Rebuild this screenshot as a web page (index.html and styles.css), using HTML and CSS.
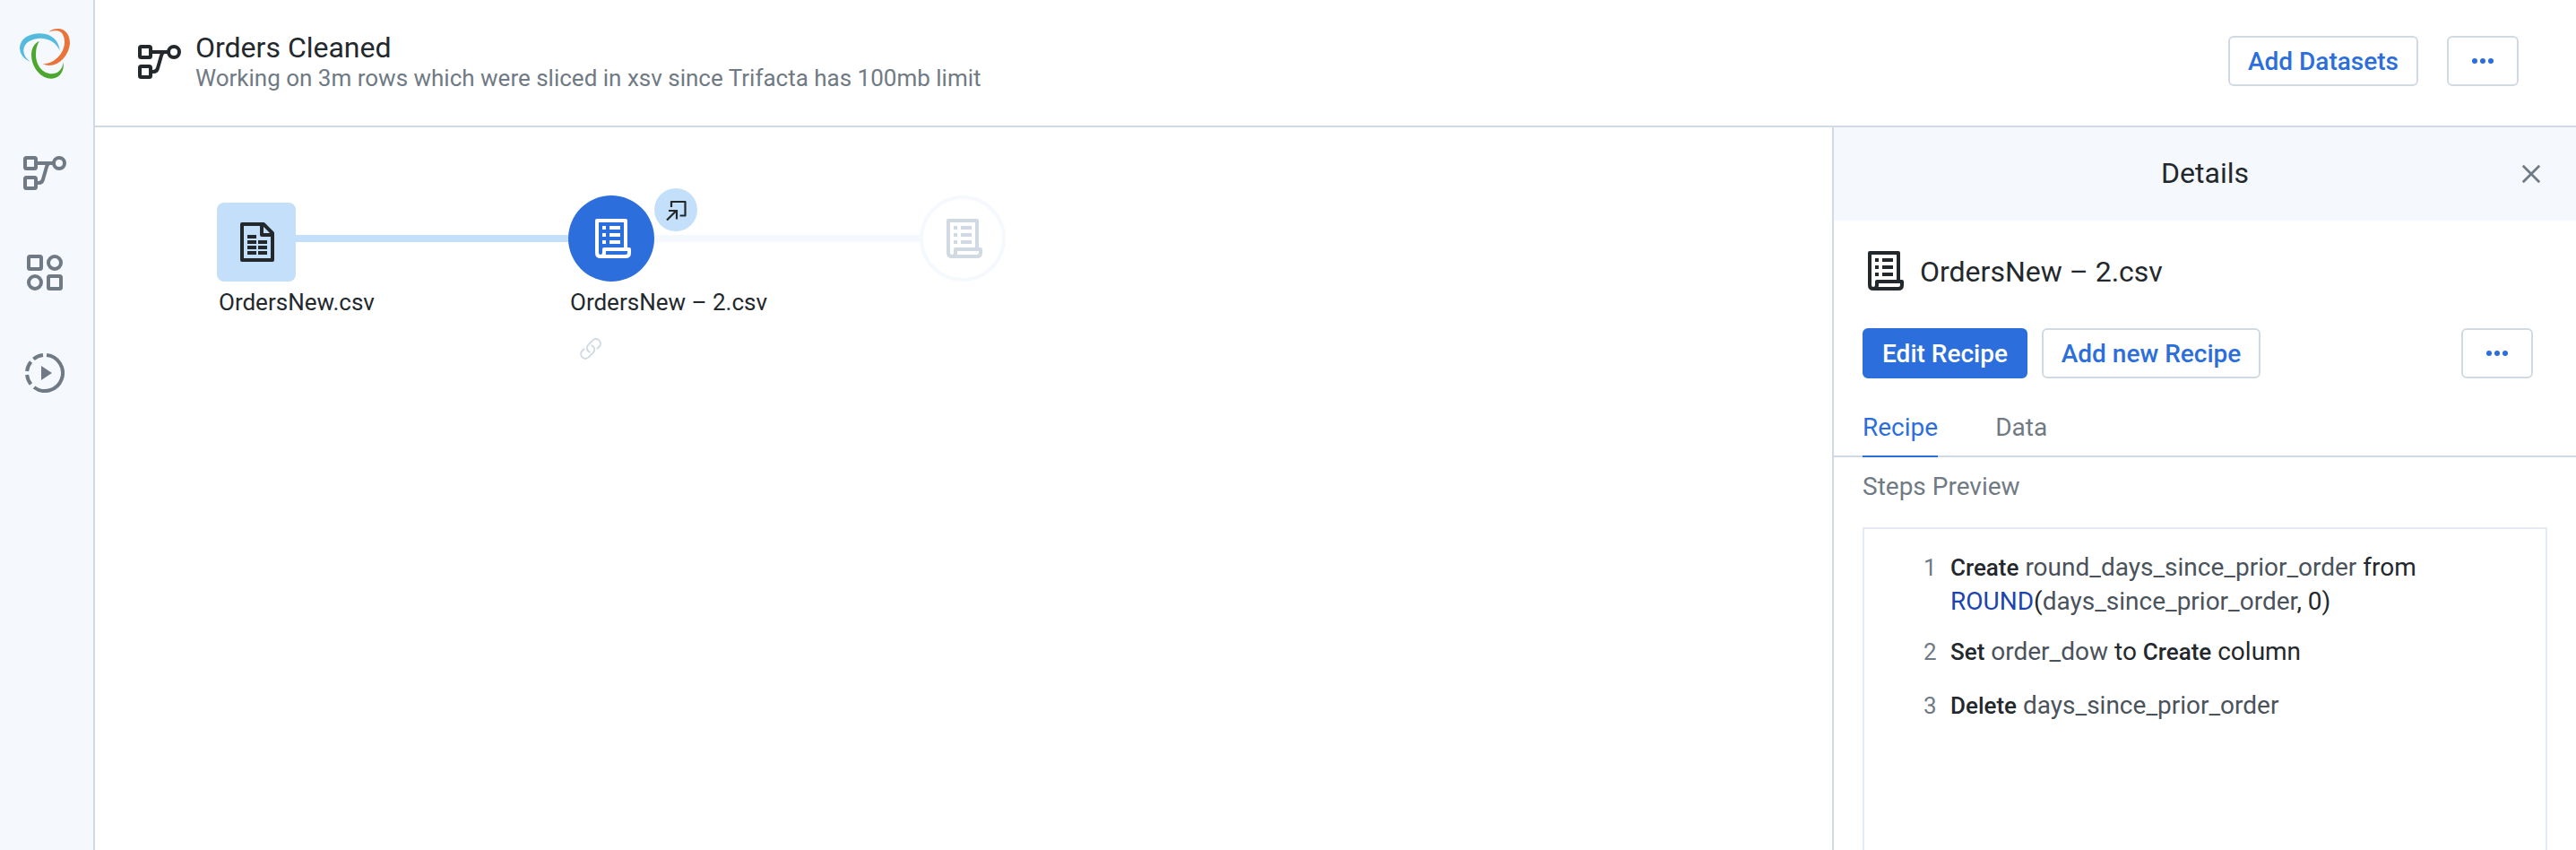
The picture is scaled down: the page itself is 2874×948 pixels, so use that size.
FILE: index.html
```html
<!DOCTYPE html>
<html lang="en">
<head>
<meta charset="utf-8">
<title>Orders Cleaned</title>
<link rel="stylesheet" href="styles.css">
</head>
<body>
<svg class="defs" width="0" height="0" aria-hidden="true">
  <symbol id="flow" viewBox="0 0 48 38">
    <g fill="none" stroke="currentColor" stroke-width="4">
      <rect x="2" y="2" width="12" height="12" rx="1.5"/>
      <rect x="2" y="24" width="12" height="12" rx="1.5"/>
      <circle cx="40" cy="8" r="6"/>
      <path d="M14 8H34M14 30h3q4 0 5-4l4-14q1-4 4-4"/>
    </g>
  </symbol>
  <symbol id="recipe" viewBox="0 0 40 44">
    <path fill="none" stroke="currentColor" stroke-width="4" stroke-linejoin="round" d="M34 34V2H2V38q0 4 4 4H34q4 0 4-4V34H10V38q0 4-4 4"/>
    <path fill="currentColor" d="M8 8h4v4H8zM16 8h12v4H16zM8 16h4v4H8zM16 16h12v4H16zM8 24h4v4H8zM16 24h12v4H16z"/>
  </symbol>
  <symbol id="dots" viewBox="0 0 24 6">
    <g fill="currentColor"><circle cx="3" cy="3" r="3"/><circle cx="12" cy="3" r="3"/><circle cx="21" cy="3" r="3"/></g>
  </symbol>
</svg>
<div class="app">
  <nav class="sidebar">
    <svg class="logo" width="56" height="56" viewBox="0 0 56 56">
      <path fill="#54bbde" d="M12.500 37C4 34 0 28 0 21C1 10 11 5.500 23 5.300C36 5.500 44 14 44.700 24.700C41 15.500 32 10.500 22 10.800C11 11.500 4.300 17 4.300 24.500C4.300 29.500 8 34.500 12.500 37Z"/>
      <path fill="#e8743b" d="M32.300 3.700C35 1 39 0 43 0C51 0 56 7 56 16.300C55 29 45 41 33 41C30 41 28 40.300 25.700 39.300C37 39.500 50 29 50 14.500C50 7 46 2 41 2.300C37 2.300 35 2.700 32.300 3.700Z"/>
      <path fill="#4ca72e" d="M21.700 14C16 16.500 13 22 13 29.700C13.500 44 24 55.700 35.300 55.700C44 55.700 50 48 48.700 37.300C47.500 46 42.500 50.300 35.500 50.300C26 50.300 18 41 18 29C18 23 19 18.500 21.700 14Z"/>
    </svg>
    <svg class="nav-flow" width="48" height="38"><use href="#flow"/></svg>
    <svg class="nav-library" width="40" height="40" viewBox="0 0 40 40" fill="none" stroke="currentColor" stroke-width="4">
      <rect x="2" y="2" width="14" height="14" rx="1.500"/><circle cx="31" cy="9" r="7"/>
      <circle cx="9" cy="31" r="7"/><rect x="24" y="24" width="14" height="14" rx="1.500"/>
    </svg>
    <svg class="nav-jobs" width="44" height="44" viewBox="0 0 44 44" fill="none" stroke="currentColor" stroke-width="4">
      <path d="M24 2.100A20 20 0 1 1 10 38M6.500 34.600A20 20 0 0 1 2.100 24M2.100 20A20 20 0 0 1 6.500 9.400M9.400 6.500A20 20 0 0 1 20 2.100"/>
      <path fill="currentColor" stroke="none" d="M18 14l12 8-12 8z"/>
    </svg>
  </nav>
  <div class="page">
    <header class="topbar">
      <svg class="topbar-icon" width="48" height="38"><use href="#flow"/></svg>
      <div class="heading">
        <h1 class="title">Orders Cleaned</h1>
        <p class="subtitle">Working on 3m rows which were sliced in xsv since Trifacta has 100mb limit</p>
      </div>
      <button class="btn add-datasets">Add Datasets</button>
      <button class="btn more"><svg width="24" height="6"><use href="#dots"/></svg></button>
    </header>
    <div class="body">
      <main class="canvas">
        <div class="edge edge-main"></div>
        <div class="edge edge-faint"></div>
        <div class="node source">
          <svg width="38" height="44" viewBox="0 0 38 44">
            <path fill="none" stroke="currentColor" stroke-width="4" stroke-linejoin="round" d="M2 2H26L36 12V42H2ZM24 2V14H36"/>
            <path fill="currentColor" d="M8 14h10v4H8zM8 20h10v4H8zM20 20h10v4H20zM8 26h10v4H8zM20 26h10v4H20zM8 32h10v4H8zM20 32h10v4H20z"/>
          </svg>
        </div>
        <div class="label label-source">OrdersNew.csv</div>
        <div class="node recipe"><svg width="40" height="44"><use href="#recipe"/></svg></div>
        <div class="label label-recipe">OrdersNew – 2.csv</div>
        <div class="node badge">
          <svg width="24" height="24" viewBox="0 0 24 24" fill="none" stroke="currentColor" stroke-width="2.200">
            <path stroke-linejoin="round" d="M7 9V3H22.500V18.500H16.500"/><path d="M2 23.500L12.500 13M4 13H13V22.500"/>
          </svg>
        </div>
        <svg class="link" width="24" height="24" viewBox="1.250 1.250 21.500 21.500" fill="none" stroke="currentColor" stroke-width="1.800" stroke-linecap="round" stroke-linejoin="round">
          <path d="M13.190 8.688a4.500 4.500 0 0 1 1.242 7.244l-4.500 4.500a4.500 4.500 0 0 1-6.364-6.364l1.757-1.757m13.350-.622 1.757-1.757a4.500 4.500 0 0 0-6.364-6.364l-4.500 4.500a4.500 4.500 0 0 0 1.242 7.244"/>
        </svg>
        <div class="node ghost"><svg width="40" height="44"><use href="#recipe"/></svg></div>
      </main>
      <aside class="panel">
        <div class="panel-head">
          <span class="panel-title">Details</span>
          <svg class="close" width="20" height="20" viewBox="0 0 20 20" stroke="currentColor" stroke-width="2.800"><path d="M.8.800L19.200 19.200M19.200.800L.8 19.200"/></svg>
        </div>
        <div class="recipe-name"><svg width="40" height="44"><use href="#recipe"/></svg><span>OrdersNew – 2.csv</span></div>
        <div class="actions">
          <button class="btn primary">Edit Recipe</button>
          <button class="btn add-recipe">Add new Recipe</button>
          <button class="btn more push"><svg width="24" height="6"><use href="#dots"/></svg></button>
        </div>
        <div class="tabs"><span class="tab active">Recipe</span><span class="tab">Data</span></div>
        <div class="steps-title">Steps Preview</div>
        <ol class="steps">
          <li class="step wrapped"><span class="num">1</span><span><b>Create</b> <i>round_days_since_prior_order</i> from<br><em>ROUND</em>(<i>days_since_prior_order</i>, 0)</span></li>
          <li class="step"><span class="num">2</span><span><b>Set</b> <i>order_dow</i> to <b>Create</b> column</span></li>
          <li class="step"><span class="num">3</span><span><b>Delete</b> <i>days_since_prior_order</i></span></li>
        </ol>
      </aside>
    </div>
  </div>
</div>
</body>
</html>
```
FILE: styles.css
```css
* { box-sizing: border-box; }
body { margin: 0; font-family: Roboto, sans-serif; color: #23282d; background: #fff; }
svg { display: block; flex: none; }
.defs { position: absolute; }
.app { display: flex; width: 2874px; height: 948px; overflow: hidden; }

.sidebar { width: 106px; flex: none; display: flex; flex-direction: column; align-items: center; padding: 32px 4px 0 0; background: #f5f9fe; border-right: 2px solid #d1dae3; color: #707a84; }
.nav-flow { margin-top: 86px; }
.nav-library { margin-top: 72px; }
.nav-jobs { margin-top: 70px; }

.page { flex: 1; display: flex; flex-direction: column; min-width: 0; }
.topbar { height: 142px; flex: none; display: flex; align-items: flex-start; padding: 0 64px 0 48px; border-bottom: 2px solid #d1dae3; }
.topbar-icon { margin-top: 50px; }
.heading { flex: 1; margin-left: 16px; padding-top: 34px; }
.title { margin: 0; font-size: 32px; line-height: 38px; font-weight: 400; }
.subtitle { margin: 0; font-size: 26px; line-height: 30px; color: #707a84; }
.btn { height: 56px; display: flex; align-items: center; justify-content: center; padding: 0; border: 2px solid #d1dae3; border-radius: 6px; background: #fff; color: #2b6edc; font: 500 28px Roboto, sans-serif; white-space: nowrap; }
.topbar .btn { margin-top: 40px; }
.add-datasets { width: 212px; margin-right: 32px; }
.more { width: 80px; }

.body { flex: 1; display: flex; min-height: 0; }
.canvas { flex: 1; position: relative; }
.node { position: absolute; display: flex; align-items: center; justify-content: center; }
.source { left: 136px; top: 84px; width: 88px; height: 88px; padding-left: 2px; border-radius: 8px; background: #c3dffa; }
.recipe { left: 528px; top: 76px; width: 96px; height: 96px; padding-left: 4px; border-radius: 50%; background: #2b6edc; color: #fff; }
.ghost { left: 920px; top: 76px; width: 96px; height: 96px; padding-left: 4px; border-radius: 50%; border: 4px solid #f5f9fe; background: #fff; color: #d1dae3; }
.badge { left: 624px; top: 68px; width: 48px; height: 48px; border-radius: 50%; background: #c3dffa; }
.edge { position: absolute; top: 120px; height: 8px; }
.edge-main { left: 224px; width: 310px; background: #c3dffa; }
.edge-faint { left: 620px; width: 304px; background: #f5f9fe; }
.label { position: absolute; top: 179px; font-size: 26px; line-height: 32px; white-space: nowrap; }
.label-source { left: 138px; }
.label-recipe { left: 530px; }
.link { position: absolute; left: 541px; top: 235px; color: #d1dae3; }

.panel { width: 830px; flex: none; display: flex; flex-direction: column; border-left: 2px solid #d1dae3; }
.panel-head { height: 104px; flex: none; display: grid; grid-template-columns: 60px 1fr 60px; align-items: center; background: #f5f9fe; font-size: 32px; line-height: 38px; }
.panel-title { grid-column: 2; padding-bottom: 2px; text-align: center; }
.close { color: #707a84; }
.recipe-name { display: flex; align-items: center; height: 44px; margin: 34px 0 0 38px; gap: 18px; font-size: 32px; line-height: 38px; }
.recipe-name span { padding-top: 2px; }
.actions { display: flex; margin: 42px 48px 0 32px; gap: 16px; }
.primary { width: 184px; background: #2b6edc; border-color: #2b6edc; color: #fff; }
.add-recipe { width: 244px; }
.push { margin-left: auto; }
.tabs { display: flex; gap: 64px; height: 88px; padding-left: 32px; border-bottom: 2px solid #d1dae3; flex: none; }
.tab { height: 88px; padding-top: 38px; font-size: 28px; line-height: 33px; color: #707a84; }
.active { color: #2b6edc; border-bottom: 2px solid #2b6edc; }
.steps-title { margin: 16px 0 0 32px; font-size: 28px; line-height: 33px; color: #707a84; }
.steps { flex: 1; list-style: none; margin: 29px 32px 0; padding: 24px 0 0 66px; border: 2px solid #e4ebf2; border-bottom: 0; font-size: 28px; line-height: 38px; }
.step { display: flex; margin-bottom: 22px; }
.wrapped { margin-bottom: 18px; }
.num { width: 30px; font-size: 26px; color: #707a84; }
.step b { font-size: 26px; font-weight: 500; }
.step i { font-style: normal; color: #4a525b; }
.step em { font-style: normal; color: #1b45ad; }
```
